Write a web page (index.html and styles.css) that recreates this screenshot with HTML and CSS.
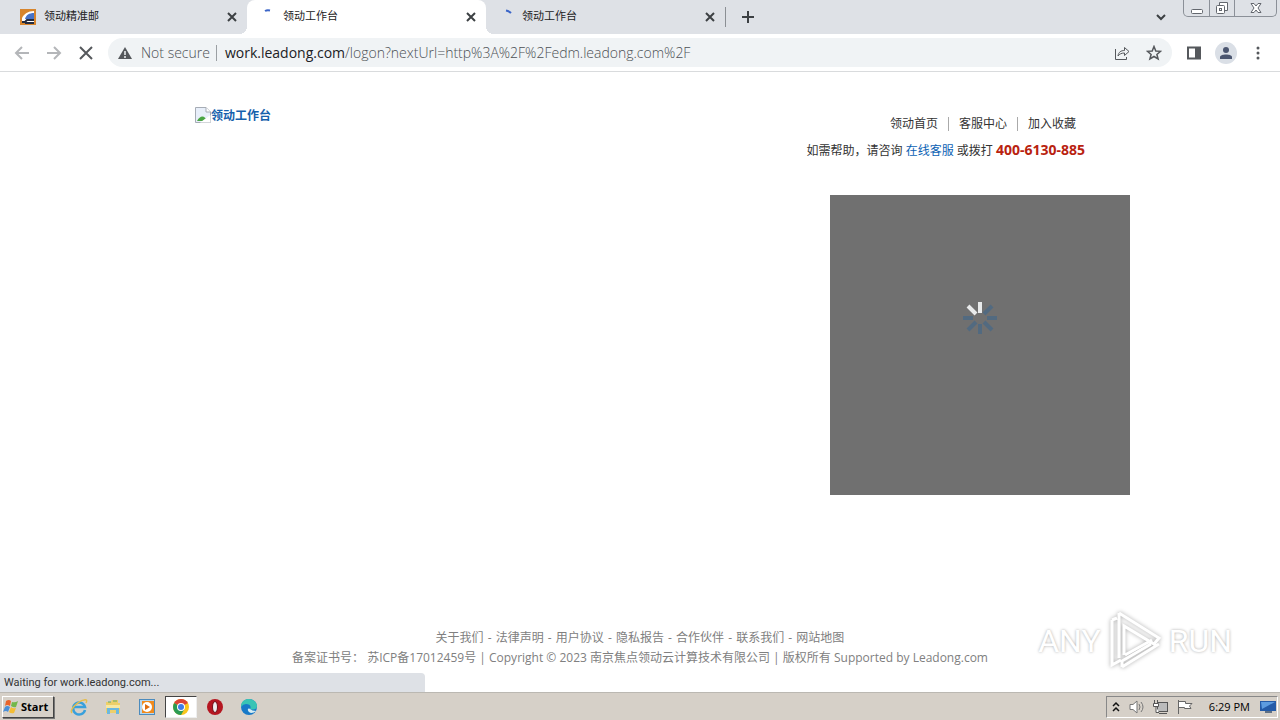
FILE: index.html
```html
<!DOCTYPE html>
<html lang="zh-CN">
<head>
    <meta charset="UTF-8">
    <meta name="viewport" content="width=device-width, initial-scale=1.0">
    <title>领动工作台</title>
    <link rel="stylesheet" href="styles.css">
</head>
<body>
    <!-- Browser tabs -->
    <header class="tab-strip">
        <div class="tab">
            <svg class="favicon" viewBox="0 0 16 16"><rect width="16" height="16" fill="#d7852d"/><path d="M2 14V9C4 5 8 2 14 2V14Z" fill="#fff"/><path d="M5 10C6 6 9 4 14 4V10Z" fill="#4773c8"/><path d="M2 13H5L7 11H14M5 14H14" stroke="#222b40" fill="none"/></svg>
            <span class="tab-title">领动精准邮</span>
            <button class="tab-close" aria-label="Close tab"><svg viewBox="0 0 10 10"><path d="M1 1L9 9M9 1L1 9"/></svg></button>
        </div>
        <div class="tab active">
            <svg class="favicon" viewBox="0 0 16 16"><path d="M6 2Q8 .800 11 1.500" stroke="#3c66c8" fill="none"/></svg>
            <span class="tab-title">领动工作台</span>
            <button class="tab-close" aria-label="Close tab"><svg viewBox="0 0 10 10"><path d="M1 1L9 9M9 1L1 9"/></svg></button>
        </div>
        <div class="tab">
            <svg class="favicon" viewBox="0 0 16 16"><path d="M8 1.500Q11 2 13 4" stroke="#3c66c8" fill="none"/></svg>
            <span class="tab-title">领动工作台</span>
            <button class="tab-close" aria-label="Close tab"><svg viewBox="0 0 10 10"><path d="M1 1L9 9M9 1L1 9"/></svg></button>
        </div>
        <span class="tab-divider"></span>
        <button class="new-tab" aria-label="New tab"><svg viewBox="0 0 12 12"><path d="M6 0V12M0 6H12"/></svg></button>
        <button class="tab-search" aria-label="Search tabs"><svg viewBox="0 0 10 10"><path d="M1 3L5 7L9 3"/></svg></button>
        <div class="window-buttons">
            <button aria-label="Minimize"><svg viewBox="0 0 14 14"><rect x="1.500" y="8.500" width="11" height="4" rx="1"/></svg></button>
            <button aria-label="Restore"><svg viewBox="0 0 14 14"><path d="M4.500 4V1.500H12.500V9.500H10"/><rect x="1.500" y="4.500" width="8" height="8" rx="1"/><rect x="4.500" y="7.500" width="2" height="2"/></svg></button>
            <button class="wide" aria-label="Close"><svg viewBox="0 0 14 14"><path d="M2 2.500H5L7 5L9 2.500H12L9 7L12 11.500H9L7 9L5 11.500H2L5 7Z"/></svg></button>
        </div>
    </header>

    <!-- Toolbar -->
    <nav class="toolbar">
        <button class="nav-btn off" aria-label="Back"><svg viewBox="0 0 16 16"><path d="M15 8H2M8 2L2 8L8 14"/></svg></button>
        <button class="nav-btn off" aria-label="Forward"><svg viewBox="0 0 16 16"><path d="M1 8H14M8 2L14 8L8 14"/></svg></button>
        <button class="nav-btn" aria-label="Stop"><svg viewBox="0 0 16 16"><path d="M2 2L14 14M14 2L2 14"/></svg></button>
        <div class="omnibox">
            <svg class="warning" viewBox="0 0 14 14"><path d="M7 1L14 13H0Z" fill="#54575b"/><path d="M7 5V9M7 10V12" stroke="#f0f3f5" stroke-width="1.500"/></svg>
            <span class="not-secure">Not secure</span>
            <span class="omni-divider"></span>
            <a class="url" href="#"><b>work.leadong.com</b>/logon?nextUrl=http%3A%2F%2Fedm.leadong.com%2F</a>
            <button class="nav-btn thin" aria-label="Share"><svg viewBox="0 0 16 16"><path d="M1.500 4V14.500H12.500V12M4 11C4.500 7 7 5.500 10.500 5.500V2.500L15 6.500L10.500 10.500V8C7.500 8 5.500 9 4 11Z"/></svg></button>
            <button class="nav-btn star" aria-label="Bookmark"><svg viewBox="0 0 16 16"><path d="M8 1.500L9.800 6L14.600 6.300L10.900 9.400L12.100 14L8 11.500L3.900 14L5.100 9.400L1.400 6.300L6.200 6Z"/></svg></button>
        </div>
        <button class="nav-btn" aria-label="Side panel"><svg viewBox="0 0 16 16"><rect x="2" y="2.500" width="12" height="11"/><path d="M11.500 2V14" stroke-width="5"/></svg></button>
        <button class="profile" aria-label="Profile"><svg viewBox="0 0 14 14"><circle cx="7" cy="4" r="3"/><path d="M1 13V11C1 7.500 13 7.500 13 11V13Z"/></svg></button>
        <button class="nav-btn dots" aria-label="Menu"><svg viewBox="0 0 16 16"><circle cx="8" cy="3" r="1.500"/><circle cx="8" cy="8" r="1.500"/><circle cx="8" cy="13" r="1.500"/></svg></button>
    </nav>

    <!-- Page -->
    <main class="page">
        <div class="container">
            <div class="page-head">
                <a class="logo" href="#"><svg viewBox="0 0 16 16"><path d="M.5.500H11L15.500 5V15.500H.5Z" fill="#e8effa" stroke="#a6acb5"/><path d="M11 .5V5H15.500" fill="#fff" stroke="#a6acb5"/><path d="M2 14C5 8 10 8 12 14Z" fill="#4aa544"/><path d="M5 15.500L15.500 8V15.500Z" fill="#fff"/></svg><span>领动工作台</span></a>
                <div class="head-right">
                    <div class="head-links">
                        <a href="#">领动首页</a>
                        <a href="#">客服中心</a>
                        <a href="#">加入收藏</a>
                    </div>
                    <div class="help">如需帮助，请咨询 <a href="#">在线客服</a> 或拨打 <strong>400-6130-885</strong></div>
                </div>
            </div>
            <div class="login-box">
                <svg class="spinner" viewBox="-18 -18 36 36">
                    <g stroke="#526a80" stroke-width="4">
                        <path d="M4 -4L12 -12"/><path d="M7 0H17"/><path d="M4 4L12 12"/><path d="M0 6V16"/><path d="M-4 4L-12 12"/><path d="M-7 0H-17"/>
                    </g>
                    <path d="M-4 -4L-12 -12M0 -5V-16" stroke="#e8eaeb" stroke-width="4"/>
                </svg>
            </div>
        </div>
        <footer class="page-foot">
            <div><a href="#">关于我们</a> - <a href="#">法律声明</a> - <a href="#">用户协议</a> - <a href="#">隐私报告</a> - <a href="#">合作伙伴</a> - <a href="#">联系我们</a> - <a href="#">网站地图</a></div>
            <div>备案证书号： 苏ICP备17012459号 | Copyright © 2023 南京焦点领动云计算技术有限公司 | 版权所有 Supported by Leadong.com</div>
        </footer>

        <div class="status">Waiting for work.leadong.com...</div>
        <div class="watermark">
            <span>ANY</span>
            <svg viewBox="0 0 60 64"><path d="M14 4L54 29L49 35L19 17V46M14 4V49M7 11V56L16 51M7 11L12 9M20 46L47 31M17 58L54 35M17 58V52L46 35"/></svg>
            <span>RUN</span>
        </div>
    </main>

    <!-- Taskbar -->
    <div class="taskbar">
        <button class="start"><svg viewBox="0 0 16 16"><path d="M3 2Q6 0 8 2L7 7Q4 5 2 7Z" fill="#e9642b"/><path d="M9 3Q12 4 15 2L13 8Q11 9 8 7Z" fill="#73b84a"/><path d="M2 8Q4 6 7 8L5 13Q3 11 0 13Z" fill="#4a8fd8"/><path d="M8 8Q10 10 13 9L11 14Q8 15 6 13Z" fill="#f4bd35"/></svg>Start</button>
        <div class="quick">
            <button aria-label="Internet Explorer"><svg viewBox="0 0 18 18"><path d="M15 12A6 6 0 1 1 15 9H4" fill="none" stroke="#39a0dc" stroke-width="2.500"/><path d="M2 15C-1 12 8 3 14 2Q18 1 16 5" fill="none" stroke="#e5bd4b" stroke-width="1.500"/></svg></button>
            <button aria-label="Explorer"><svg viewBox="0 0 18 18"><path d="M2 4H7L8 2H14V5H16V15H2Z" fill="#edcf69"/><path d="M4 4H7M9 3H13" stroke="#62aa6b"/><path d="M2 7H16V10H2Z" fill="#f7e8a2"/><path d="M3 16V10H15V16H12V12H6V16Z" fill="#6cb8df"/></svg></button>
            <button aria-label="Media Player"><svg viewBox="0 0 18 18"><rect x="1.500" y="1.500" width="15" height="15" fill="#b5d6ef" stroke="#4c8bbd"/><rect x="4" y="3" width="12" height="12" fill="#f08a1d"/><circle cx="9" cy="9" r="5" fill="#fff"/><path d="M7 6L12 9L7 12Z" fill="#e06d10"/></svg></button>
            <button class="current" aria-label="Chrome"><svg viewBox="0 0 18 18"><circle cx="9" cy="9" r="8" fill="#f9c51c"/><path d="M9 9L2.100 5A8 8 0 0 1 15.900 5Z" fill="#db4437"/><path d="M9 9L2.100 5A8 8 0 0 0 9 17L12.500 11Z" fill="#2c9b54"/><circle cx="9" cy="9" r="4" fill="#fff"/><circle cx="9" cy="9" r="3" fill="#3f7de8"/></svg></button>
            <button aria-label="Opera"><svg viewBox="0 0 18 18"><circle cx="9" cy="9" r="8" fill="#b51620"/><ellipse cx="9" cy="9" rx="2.500" ry="5.500" fill="#eee" stroke="#70101a"/></svg></button>
            <button aria-label="Edge"><svg viewBox="0 0 18 18"><circle cx="9" cy="9" r="8" fill="#1879c8"/><path d="M1 9C1 3 5 1 9 1C14 1 17 5 17 8C17 12 12 12 10 11C12 8 9 6 6 6Q3 6 1 9Z" fill="#39c4b5"/><path d="M10 11C7 9 7 14 11 15Q14 15 16 13Q12 13 10 11Z" fill="#d7edf3"/></svg></button>
        </div>
        <div class="tray">
            <svg class="small" viewBox="0 0 10 12"><path d="M2 5L5 2L8 5M2 10L5 7L8 10" fill="none" stroke="#111" stroke-width="1.500"/></svg>
            <svg viewBox="0 0 16 16"><path d="M1 5.500H4L8 2V14L4 10.500H1Z" fill="#fff" stroke="#777"/><path d="M10 5Q12 8 10 11M12 3Q16 8 12 13" fill="none" stroke="#777"/></svg>
            <svg viewBox="0 0 16 16"><rect x="4.500" y="3.500" width="10" height="9" fill="#bbb" stroke="#555"/><path d="M6 14.500H14M1.500 1V4M4.500 1V4M.5 4.500H5.500V7.500H.5ZM3 7.500V13.500H6" fill="#fff" stroke="#555"/></svg>
            <svg viewBox="0 0 16 16"><path d="M1.500 1V15M2 2.500H8.500V4.500H15L12.500 7L14 9.500H7.500V8.500H2" fill="#fff" stroke="#666"/></svg>
            <time>6:29 PM</time>
            <svg viewBox="0 0 16 16"><path d="M0 2H16V12H0Z" fill="#245ba8"/><path d="M1 3H15L2 10Z" fill="#5d9ce0"/><path d="M5 13H12" stroke="#5f7085" stroke-width="2"/></svg>
        </div>
    </div>
</body>
</html>
```
FILE: styles.css
```css
* {
    box-sizing: border-box;
}
body {
    margin: 0;
    min-height: 100vh;
    display: flex;
    flex-direction: column;
    font-family: "Open Sans", "Noto Sans CJK SC", sans-serif;
    font-size: 12px;
    color: #333;
    background: #fff;
}
button {
    margin: 0;
    padding: 0;
    border: 0;
    background: none;
    font: inherit;
    color: inherit;
}
svg {
    display: block;
    flex: none;
}
a {
    color: inherit;
    text-decoration: none;
}

/* Tabs */
.tab-strip {
    display: flex;
    align-items: center;
    height: 34px;
    padding-left: 8px;
    background: #dee1e6;
}
.tab {
    position: relative;
    display: flex;
    align-items: center;
    width: 239px;
    height: 34px;
    padding: 0 10px 0 12px;
    font-size: 11px;
    color: #222;
}
.tab.active {
    background: #fff;
    border-radius: 8px 8px 0 0;
}
/* curved feet of the open tab */
.tab.active::before,
.tab.active::after {
    content: "";
    position: absolute;
    bottom: 0;
    width: 8px;
    height: 8px;
}
.tab.active::before {
    left: -8px;
    background: radial-gradient(circle at 0 0, #dee1e6 8px, #fff 8px);
}
.tab.active::after {
    right: -8px;
    background: radial-gradient(circle at 100% 0, #dee1e6 8px, #fff 8px);
}
.favicon {
    width: 16px;
    height: 16px;
    margin-right: 8px;
}
.tab-title {
    flex: 1;
    line-height: 16px;
    padding-bottom: 2px;
}
.tab-close svg {
    width: 10px;
    height: 10px;
}
.tab-strip svg path {
    stroke-width: 2;
}
.tab-close svg,
.new-tab svg,
.tab-search svg {
    fill: none;
    stroke: #3c4043;
}
.tab-divider {
    width: 1px;
    height: 20px;
    background: #8b8f94;
}
.new-tab {
    margin-left: 16px;
}
.new-tab svg {
    width: 12px;
    height: 12px;
}
.tab-search {
    margin-left: auto;
    margin-right: 17px;
}
.tab-search svg {
    width: 10px;
    height: 10px;
}
.window-buttons {
    display: flex;
    align-self: flex-start;
    height: 17px;
    margin-right: 3px;
    border: 1px solid #8b9098;
    border-top: 0;
    border-radius: 0 0 5px 5px;
}
.window-buttons button {
    display: flex;
    align-items: center;
    justify-content: center;
    width: 25px;
}
.window-buttons button + button {
    border-left: 1px solid #8b9098;
}
.window-buttons .wide {
    width: 42px;
}
.window-buttons svg {
    width: 14px;
    height: 14px;
    fill: #fff;
    stroke: #63676e;
}
.window-buttons svg path {
    stroke-width: 1;
}

/* Toolbar */
.toolbar {
    display: flex;
    align-items: center;
    gap: 16px;
    height: 38px;
    padding: 0 14px;
    border-bottom: 1px solid #d9dbdd;
}
.nav-btn svg {
    width: 16px;
    height: 16px;
    fill: none;
    stroke: #55585c;
    stroke-width: 2;
}
.nav-btn.off svg {
    stroke: #b4b6b9;
}
.nav-btn.thin svg {
    stroke-width: 1;
}
.nav-btn.star svg {
    stroke-width: 1.5;
}
.nav-btn.dots svg {
    fill: #55585c;
    stroke: none;
}
.omnibox {
    flex: 1;
    display: flex;
    align-items: center;
    height: 29px;
    margin-left: -2px;
    margin-right: -2px;
    padding: 0 10px;
    border-radius: 15px;
    background: #f0f3f5;
    font-size: 14px;
    font-weight: 300;
    color: #4c5054;
}
.warning {
    width: 14px;
    height: 14px;
    margin-right: 9px;
}
.omni-divider {
    width: 1px;
    height: 16px;
    margin: 0 8px 0 6px;
    background: #9b9fa3;
}
.url {
    flex: 1;
}
.url b {
    font-weight: 400;
    color: #202124;
}
.omnibox .nav-btn + .nav-btn {
    margin-left: 16px;
}
.profile {
    display: flex;
    align-items: center;
    justify-content: center;
    width: 22px;
    height: 22px;
    margin: 0 -3px;
    border-radius: 50%;
    background: #dadfe6;
}
.profile svg {
    width: 14px;
    height: 14px;
    fill: #4b5670;
}

/* Page */
.page {
    position: relative;
    flex: 1;
    display: flex;
    flex-direction: column;
}
.container {
    width: 100%;
    max-width: 980px;
    margin: 0 auto;
}
.page-head {
    display: flex;
    justify-content: space-between;
    padding: 35px 45px 0;
}
.logo {
    display: flex;
    height: 16px;
    line-height: 18px;
    font-weight: bold;
    color: #1560ac;
}
.logo svg {
    width: 16px;
    height: 16px;
}
.head-right {
    padding-top: 4px;
    text-align: right;
}
.head-links {
    display: flex;
    justify-content: flex-end;
    align-items: center;
    height: 26px;
    padding-right: 9px;
}
.head-links a {
    line-height: 14px;
}
.head-links a + a {
    margin-left: 10px;
    padding-left: 10px;
    border-left: 1px solid #aaa;
}
.help {
    height: 26px;
    line-height: 26px;
}
.help a {
    color: #0c62b4;
}
.help strong {
    font-size: 14px;
    color: #b9220f;
}
.login-box {
    display: flex;
    justify-content: center;
    height: 300px;
    width: 300px;
    margin: 32px 0 0 auto;
    padding-top: 105px;
    background: #707070;
}
.spinner {
    width: 36px;
    height: 36px;
}
.page-foot {
    margin-top: auto;
    padding-bottom: 24px;
    line-height: 20px;
    text-align: center;
    color: #808080;
}
.page-foot a {
    margin: 0 1px;
}
.status {
    position: absolute;
    left: 0;
    bottom: 0;
    width: 425px;
    height: 19px;
    padding-left: 4px;
    border-radius: 0 4px 0 0;
    background: #dee1e6;
    font-family: Roboto, sans-serif;
    font-size: 11px;
    line-height: 19px;
}
.watermark {
    position: absolute;
    right: 48px;
    bottom: 19px;
    display: flex;
    align-items: center;
    gap: 4px;
    font-family: Roboto, sans-serif;
    font-size: 32px;
    color: #fff;
    text-shadow: 0 0 3px #aaa;
}
.watermark svg {
    width: 60px;
    height: 64px;
    fill: none;
    stroke: #fff;
    stroke-width: 3;
    filter: drop-shadow(0 0 2px #aaa);
}

/* Taskbar */
.taskbar {
    display: flex;
    align-items: center;
    height: 28px;
    padding: 2px;
    border-top: 1px solid #bbb8b2;
    background: #d6d0c8;
    font-size: 11px;
    color: #000;
}
.start {
    display: flex;
    align-items: center;
    gap: 2px;
    width: 52px;
    height: 22px;
    border: 1px solid;
    border-color: #fff #444 #444 #fff;
    box-shadow: 1px 1px 0 #777;
    font-weight: bold;
}
.start svg {
    width: 16px;
    height: 16px;
}
.quick {
    display: flex;
    gap: 2px;
    margin-left: 9px;
}
.quick button {
    display: flex;
    align-items: center;
    justify-content: center;
    width: 32px;
    height: 22px;
}
.quick .current {
    background: #fff;
    border: 1px solid;
    border-color: #444 #eee #eee #444;
}
.quick svg {
    width: 18px;
    height: 18px;
}
.tray {
    display: flex;
    align-items: center;
    gap: 8px;
    height: 22px;
    margin-left: auto;
    padding: 0 1px 0 4px;
    border: 1px solid;
    border-color: #888 #fff #fff #888;
}
.tray svg {
    width: 16px;
    height: 16px;
}
.tray .small {
    width: 10px;
    height: 12px;
}
.tray time {
    margin: 0 2px 0 8px;
}
```
